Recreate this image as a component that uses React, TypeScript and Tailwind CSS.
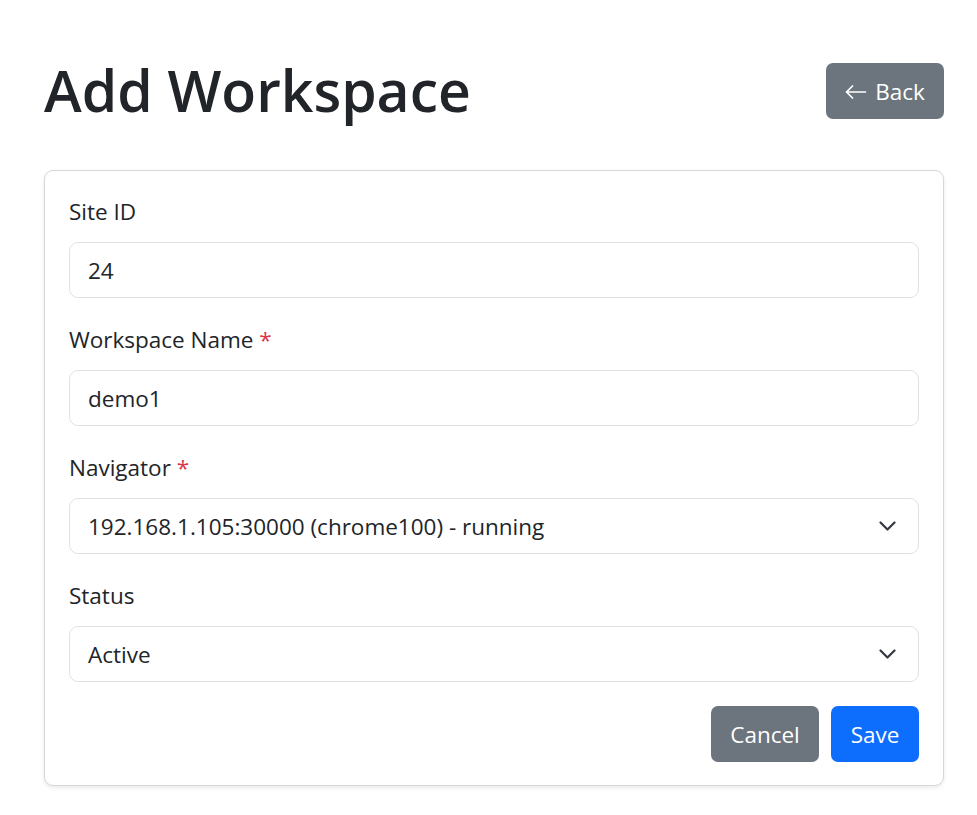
import React from "react";

const font = { fontFamily: '"Open Sans", "Noto Sans", sans-serif' };

function Chevron() {
  return (
    <svg
      className="pointer-events-none absolute right-[22px] top-1/2 -translate-y-1/2"
      width="17"
      height="10"
      viewBox="0 0 17 10"
      fill="none"
      stroke="#343a40"
      strokeWidth="2.2"
      strokeLinecap="round"
      strokeLinejoin="round"
    >
      <path d="M1.5 1.5L8.5 8.5L15.5 1.5" />
    </svg>
  );
}

function Label({ text, required }: { text: string; required?: boolean }) {
  return (
    <label className="mb-[12px] block text-[22.5px] leading-[36px] text-[#212529]">
      {text}
      {required && <span className="text-[#dc3545]"> *</span>}
    </label>
  );
}

function Field({ value }: { value: string }) {
  return (
    <div className="flex h-[56px] items-center rounded-[9px] border border-[#dee2e6] bg-white px-[18px] pt-[2px] text-[22.5px] text-[#212529]">
      {value}
    </div>
  );
}

function SelectField({ value }: { value: string }) {
  return (
    <div className="relative flex h-[56px] items-center rounded-[9px] border border-[#dee2e6] bg-white px-[18px] pt-[2px] text-[22.5px] text-[#212529]">
      {value}
      <Chevron />
    </div>
  );
}

export default function App() {
  return (
    <div className="min-h-[815px] w-full bg-white" style={font}>
      <div className="pl-[44px] pr-[33px] pt-[54px]">
        <div className="flex items-center justify-between">
          <h1 className="text-[57px] font-semibold leading-[72px] text-[#212529]">Add Workspace</h1>
          <button className="mt-[1px] flex h-[56px] w-[118px] items-center justify-center gap-[8px] rounded-[7px] bg-[#6c757d] pt-[2px] text-[22.5px] text-white">
            <svg width="22" height="14" viewBox="0 0 22 14" fill="none" stroke="white" strokeWidth="1.7" strokeLinecap="round" strokeLinejoin="round">
              <path d="M1.5 7H20.5M7.5 1L1.5 7L7.5 13" />
            </svg>
            <span>Back</span>
          </button>
        </div>
        <div className="mt-[44px] rounded-[9px] border border-[#d5d7da] bg-white px-[24px] pb-[23px] pt-[23px] shadow-[0_2px_4px_rgba(0,0,0,0.08)]">
          <div className="mb-[24px]">
            <Label text="Site ID" />
            <Field value="24" />
          </div>
          <div className="mb-[24px]">
            <Label text="Workspace Name" required />
            <Field value="demo1" />
          </div>
          <div className="mb-[24px]">
            <Label text="Navigator" required />
            <SelectField value="192.168.1.105:30000 (chrome100) - running" />
          </div>
          <div className="mb-[24px]">
            <Label text="Status" />
            <SelectField value="Active" />
          </div>
          <div className="flex justify-end gap-[12px]">
            <button className="flex h-[56px] w-[108px] items-center justify-center rounded-[7px] bg-[#6c757d] pt-[2px] text-[22.5px] text-white">
              Cancel
            </button>
            <button className="flex h-[56px] w-[88px] items-center justify-center rounded-[7px] bg-[#0d6efd] pt-[2px] text-[22.5px] text-white">
              Save
            </button>
          </div>
        </div>
      </div>
    </div>
  );
}
